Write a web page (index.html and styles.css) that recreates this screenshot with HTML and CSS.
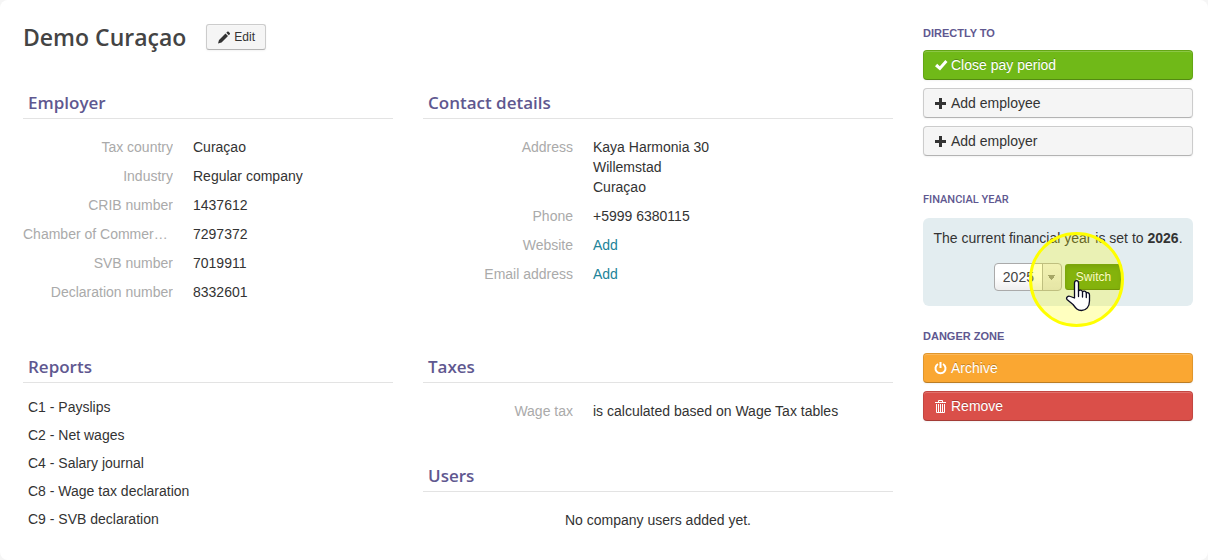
FILE: index.html
```html
<!DOCTYPE html>
<html lang="en">

<head>
  <meta charset="UTF-8">
  <meta name="viewport" content="width=device-width, initial-scale=1">
  <title>Demo Curaçao</title>
  <link rel="stylesheet" href="styles.css">
</head>

<body>
  <div class="page">
    <main class="main">
      <header class="page-header">
        <h1>Demo Curaçao</h1>
        <button type="button" class="btn btn-small">
          <svg class="icon" viewBox="0 0 14 14"><path d="M1 13.500l1-3.500 6.500-6.500 2.500 2.500L4.500 12.500zM9.300 2.700l1-1c.4-.4.900-.4 1.300 0l1.200 1.200c.4.400.4.900 0 1.300l-1 1z"/></svg>
          Edit
        </button>
      </header>

      <div class="columns">
        <section>
          <h2>Employer</h2>
          <dl class="details">
            <dt>Tax country</dt>
            <dd>Curaçao</dd>
            <dt>Industry</dt>
            <dd>Regular company</dd>
            <dt>CRIB number</dt>
            <dd>1437612</dd>
            <dt>Chamber of Commerce number</dt>
            <dd>7297372</dd>
            <dt>SVB number</dt>
            <dd>7019911</dd>
            <dt>Declaration number</dt>
            <dd>8332601</dd>
          </dl>
        </section>

        <section>
          <h2>Contact details</h2>
          <dl class="details">
            <dt>Address</dt>
            <dd>Kaya Harmonia 30<br>Willemstad<br>Curaçao</dd>
            <dt>Phone</dt>
            <dd>+5999 6380115</dd>
            <dt>Website</dt>
            <dd><a href="#">Add</a></dd>
            <dt>Email address</dt>
            <dd><a href="#">Add</a></dd>
          </dl>
        </section>

        <section>
          <h2>Reports</h2>
          <ul class="reports">
            <li><a href="#">C1 - Payslips</a></li>
            <li><a href="#">C2 - Net wages</a></li>
            <li><a href="#">C4 - Salary journal</a></li>
            <li><a href="#">C8 - Wage tax declaration</a></li>
            <li><a href="#">C9 - SVB declaration</a></li>
          </ul>
        </section>

        <div class="stack">
          <section>
            <h2>Taxes</h2>
            <dl class="details">
              <dt>Wage tax</dt>
              <dd>is calculated based on Wage Tax tables</dd>
            </dl>
          </section>
          <section>
            <h2>Users</h2>
            <p class="empty">No company users added yet.</p>
          </section>
        </div>
      </div>
    </main>

    <aside class="sidebar">
      <section class="actions">
        <h3>Directly to</h3>
        <button type="button" class="btn btn-block btn-success">
          <svg class="icon" viewBox="0 0 14 14"><path d="M1 8.200l2.200-2.400 2.600 2.400L11.300 2l2.200 2.100-7.500 8.400z"/></svg>
          Close pay period
        </button>
        <button type="button" class="btn btn-block">
          <svg class="icon" viewBox="0 0 14 14"><path d="M5 2h3v4h4v3H8v4H5V9H1V6h4z"/></svg>
          Add employee
        </button>
        <button type="button" class="btn btn-block">
          <svg class="icon" viewBox="0 0 14 14"><path d="M5 2h3v4h4v3H8v4H5V9H1V6h4z"/></svg>
          Add employer
        </button>
      </section>

      <section class="year">
        <h3>Financial year</h3>
        <form class="year-box">
          <p>The current financial year is set to <strong>2026</strong>.</p>
          <div class="year-row">
            <select class="year-select" aria-label="Financial year">
              <option>2024</option>
              <option selected>2025</option>
              <option>2026</option>
            </select>
            <div class="switch">
              <button type="button" class="btn btn-small btn-success btn-pressed">Switch</button>
              <span class="halo"></span>
              <svg class="pointer" viewBox="0 0 27 33"><path d="M9.500 19V4C9.500 .800 13.500 .800 13.500 4v8c.5-1.300 3.600-1.100 4 .8.900-1.200 3.500-.8 3.800 1 1.400-.7 3.200.1 3.200 2.200v6c0 5.500-3.300 9.500-8 9.500-4 0-5.500-2-8.500-6l-5.700-4.700c-1.900-2 .5-4.500 3.200-3.300z" fill="#fff" stroke="#0b0b22" stroke-width="1.300" stroke-linejoin="round"/><path d="M13.500 12v5.500M17.500 13v5M21.300 14.500v4" fill="none" stroke="#0b0b22" stroke-width="1.300" stroke-linecap="round"/></svg>
            </div>
          </div>
        </form>
      </section>

      <section class="danger">
        <h3>Danger zone</h3>
        <button type="button" class="btn btn-block btn-warning">
          <svg class="icon" viewBox="0 0 14 14"><path d="M4 3a5 5 0 1 0 5 0M6.500 1v6" fill="none" stroke="currentColor" stroke-width="2"/></svg>
          Archive
        </button>
        <button type="button" class="btn btn-block btn-danger">
          <svg class="icon" viewBox="0 0 14 14"><path d="M1 3.500h11M4.500 3V1.500h4V3M2.500 5v8.500h8V5M4.500 5v8M6.500 5v8M8.500 5v8" fill="none" stroke="currentColor"/></svg>
          Remove
        </button>
      </section>
    </aside>
  </div>
</body>

</html>
```
FILE: styles.css
```css
* {
  box-sizing: border-box;
}

body {
  margin: 0;
  background: #f5f5f5;
  color: #333;
  font: 14px/20px "Liberation Sans", Arial, sans-serif;
}

h1,
h2,
h3,
p,
ul,
dl,
dd {
  margin: 0;
  padding: 0;
}

h1,
h2 {
  font-family: "Trebuchet MS", "Open Sans", sans-serif;
  font-weight: 600;
}

a {
  color: #218399;
  text-decoration: none;
}

.page {
  display: grid;
  grid-template-columns: 87fr 27fr;
  gap: 30px;
  min-height: 100vh;
  padding: 23px 15px 20px 23px;
  background: #fff;
  border-radius: 8px;
}

.page-header {
  display: flex;
  align-items: center;
  gap: 20px;
  height: 28px;
  margin-bottom: 37px;
}

h1 {
  color: #444;
  font-size: 23px;
  line-height: 30px;
}

h2 {
  margin-bottom: 18px;
  padding: 0 5px;
  border-bottom: 1px solid #e3e3e3;
  color: #5f5890;
  font-size: 17px;
  line-height: 30px;
}

h3 {
  color: #5f5890;
  font-size: 11px;
  line-height: 20px;
  text-transform: uppercase;
}

.columns {
  display: grid;
  grid-template-columns: 37fr 47fr;
  gap: 41px 30px;
}

.stack {
  display: flex;
  flex-direction: column;
  gap: 31px;
}

.details {
  display: grid;
  grid-template-columns: 150px 1fr;
  column-gap: 20px;
}

.details dt {
  overflow: hidden;
  color: #aaa;
  text-align: right;
  text-overflow: ellipsis;
  white-space: nowrap;
}

.details dd {
  margin-bottom: 9px;
}

.reports {
  margin-top: -8px;
  padding: 0 5px;
  list-style: none;
  line-height: 28px;
}

.reports a {
  color: #333;
}

.empty {
  text-align: center;
}

/* buttons */

.btn {
  display: flex;
  align-items: center;
  gap: 3px;
  height: 30px;
  padding: 0 10px;
  border: 1px solid #ccc;
  border-bottom-color: #b3b3b3;
  border-radius: 4px;
  background: #f5f5f5;
  box-shadow: inset 0 1px 0 rgba(255, 255, 255, .2), 0 1px 2px rgba(0, 0, 0, .05);
  color: #333;
  font: inherit;
}

.btn-small {
  height: 26px;
  border-radius: 3px;
  font-size: 12px;
}

.btn-block {
  width: 100%;
}

.btn-success,
.btn-warning,
.btn-danger {
  border-color: rgba(0, 0, 0, .1) rgba(0, 0, 0, .1) rgba(0, 0, 0, .25);
  color: #fff;
  text-shadow: 0 -1px 0 rgba(0, 0, 0, .25);
}

.btn-success {
  background-color: #70b918;
}

.btn-warning {
  background-color: #faa732;
}

.btn-danger {
  background-color: #da4f49;
}

.btn-pressed {
  background-color: #5b9a10;
  box-shadow: inset 0 2px 4px rgba(0, 0, 0, .15);
}

.icon {
  width: 14px;
  height: 14px;
  flex: none;
  fill: currentColor;
}

/* sidebar */

.sidebar h3 {
  margin-bottom: 8px;
}

.actions,
.danger {
  display: flex;
  flex-direction: column;
  gap: 8px;
}

.sidebar .actions h3,
.sidebar .danger h3 {
  margin-bottom: -1px;
}

.year {
  margin: 34px 0 20px;
}

.year h3 {
  font-family: Roboto, sans-serif;
  font-weight: 500;
}

.year-box {
  padding: 10px 5px 15px;
  border-radius: 6px;
  background: #e3edf0;
  text-align: center;
}

.year-row {
  display: flex;
  align-items: center;
  justify-content: center;
  gap: 3px;
  margin-top: 15px;
}

.year-select {
  width: 68px;
  height: 28px;
  padding: 0 8px;
  border: 1px solid #aaa;
  border-radius: 4px;
  appearance: none;
  background:
    conic-gradient(from -40deg at 50% 100%, #888 80deg, transparent 0) right 6px top 11px / 7px 5px no-repeat,
    linear-gradient(#aaa, #aaa) right 18px top / 1px 100% no-repeat,
    linear-gradient(#eee, #ddd) right top / 18px 100% no-repeat,
    linear-gradient(#fff 50%, #eee);
  color: #444;
  font: inherit;
}

.switch {
  position: relative;
}

/* click highlight drawn over the button */
.halo {
  position: absolute;
  top: -32px;
  left: -36px;
  width: 95px;
  height: 95px;
  border: 3px solid #ff0;
  border-radius: 50%;
  background: rgba(255, 255, 0, .25);
  pointer-events: none;
}

.pointer {
  position: absolute;
  top: 15px;
  left: 0;
  width: 27px;
  height: 33px;
  pointer-events: none;
}
```
